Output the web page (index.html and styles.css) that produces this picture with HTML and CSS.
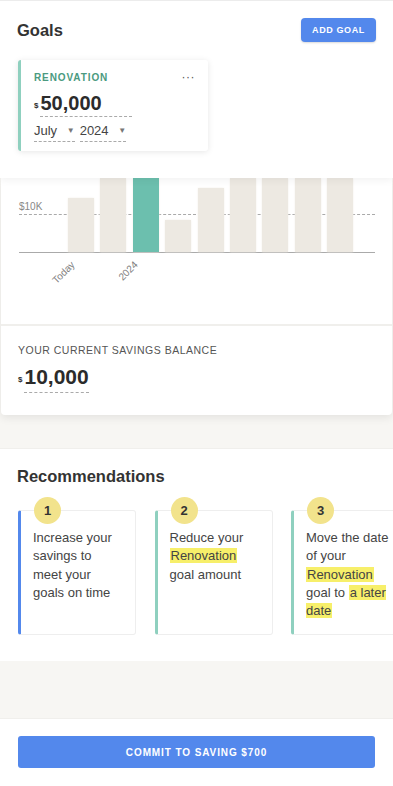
FILE: index.html
```html
<!DOCTYPE html>
<html lang="en">
<head>
  <meta charset="UTF-8" />
  <title>Goals</title>
  <link rel="stylesheet" href="styles.css">
</head>
<body>

  <header class="goals-header">
    <div class="goals-top">
      <h1 class="title">Goals</h1>
      <button class="btn-small">ADD GOAL</button>
    </div>

    <div class="goal-card">
      <div class="goal-name-row">
        <span class="goal-name">RENOVATION</span>
        <span class="goal-menu">&middot;&middot;&middot;</span>
      </div>
      <div class="goal-amount"><sup>$</sup><span class="dashed">50,000</span></div>
      <div class="goal-date">
        <span class="dashed date-part">July <span class="caret">&#9660;</span></span>
        <span class="dashed date-part">2024 <span class="caret">&#9660;</span></span>
      </div>
    </div>
  </header>

  <section class="chart-card">
    <div class="chart">
      <div class="plot">
        <span class="axis-label">$10K</span>
        <div class="ref-line"></div>
        <div class="bars">
          <div class="bar" style="height: 54px"></div>
          <div class="bar" style="height: 74px"></div>
          <div class="bar current" style="height: 74px"></div>
          <div class="bar" style="height: 32px"></div>
          <div class="bar" style="height: 64px"></div>
          <div class="bar" style="height: 74px"></div>
          <div class="bar" style="height: 74px"></div>
          <div class="bar" style="height: 74px"></div>
          <div class="bar" style="height: 74px"></div>
        </div>
      </div>
      <div class="x-labels">
        <span class="x-label" style="left: 50px">Today</span>
        <span class="x-label" style="left: 113px">2024</span>
      </div>
    </div>

    <div class="balance">
      <div class="balance-label">YOUR CURRENT SAVINGS BALANCE</div>
      <div class="balance-amount"><sup>$</sup><span class="dashed">10,000</span></div>
    </div>
  </section>

  <section class="recs">
    <h2 class="title">Recommendations</h2>
    <div class="rec-row">
      <div class="rec-card blue">
        <span class="rec-num">1</span>
        <p>Increase your savings to meet your goals on time</p>
      </div>
      <div class="rec-card">
        <span class="rec-num">2</span>
        <p>Reduce your <mark>Renovation</mark> goal amount</p>
      </div>
      <div class="rec-card">
        <span class="rec-num">3</span>
        <p>Move the date of your <mark>Renovation</mark> goal to <mark>a later date</mark></p>
      </div>
    </div>
  </section>

  <div class="spacer"></div>

  <footer class="footer">
    <button class="btn-wide">COMMIT TO SAVING $700</button>
  </footer>

</body>
</html>
```

FILE: styles.css
```css
body {
  margin: 0;
  background: #f7f6f3;
  font-family: "Liberation Sans", Arial, sans-serif;
  color: #333;
}

.title {
  margin: 0;
  font-size: 16.5px;
  font-weight: 700;
  color: #333;
}

.goals-header {
  background: #fff;
  border-top: 1px solid #ececec;
  padding: 17px 17px 27px 17px;
  box-shadow: 0 2px 8px rgba(0, 0, 0, 0.06);
  position: relative;
  z-index: 2;
}

.goals-top {
  display: flex;
  justify-content: space-between;
  align-items: center;
  height: 24px;
}

.btn-small {
  height: 24px;
  width: 75px;
  background: #5388ec;
  color: #fff;
  border: none;
  border-radius: 4px;
  font-family: inherit;
  font-weight: 700;
  font-size: 9px;
  letter-spacing: 0.6px;
  box-shadow: 0 1px 2px rgba(0, 0, 0, 0.15);
}

.goal-card {
  width: 174px;
  height: 71px;
  margin-top: 18px;
  margin-left: 1px;
  padding: 10px 0 10px 13px;
  background: #fff;
  border-left: 3px solid #8fd0bf;
  border-radius: 3px;
  box-shadow: 0 1px 6px rgba(0, 0, 0, 0.1);
}

.goal-name-row {
  display: flex;
  justify-content: space-between;
  align-items: center;
  padding-right: 13px;
}

.goal-name {
  font-size: 10px;
  font-weight: 700;
  letter-spacing: 0.9px;
  color: #4b9a80;
}

.goal-menu {
  font-size: 12px;
  color: #555;
  letter-spacing: 0.5px;
}

sup {
  font-size: 8px;
  font-weight: 700;
  vertical-align: top;
  position: relative;
  top: 3px;
  margin-right: 2px;
}

.dashed {
  border-bottom: 1px dashed #aaa;
}

.goal-amount {
  margin-top: 7px;
  font-size: 20px;
  font-weight: 700;
  line-height: 24px;
  color: #2b2b2b;
}

.goal-amount .dashed {
  display: inline-block;
  width: 92px;
  padding-bottom: 1px;
}

.goal-date {
  margin-top: 6px;
  font-size: 13px;
  line-height: 16px;
  color: #444;
  display: flex;
  gap: 5px;
}

.date-part {
  padding-bottom: 0;
}

.caret {
  font-size: 8px;
  color: #777;
  margin-left: 6px;
  position: relative;
  top: -2px;
}

.chart-card {
  margin: 0 1px;
  background: #fff;
  border-radius: 0 0 4px 4px;
  box-shadow: 0 3px 8px rgba(0, 0, 0, 0.08);
}

.chart {
  height: 146px;
  padding: 0 17px 0 18px;
}

.plot {
  position: relative;
  height: 74px;
  border-bottom: 1px solid #aaa;
}

.axis-label {
  position: absolute;
  left: 0;
  top: 23px;
  font-size: 10px;
  color: #888;
}

.ref-line {
  position: absolute;
  left: 0;
  right: 0;
  top: 36px;
  border-top: 1px dashed #aaa;
}

.bars {
  position: relative;
  display: flex;
  align-items: flex-end;
  gap: 6.4px;
  height: 74px;
  padding-left: 49px;
}

.bar {
  width: 26px;
  background: #ede9e2;
  box-shadow: 0 0 2px #f3f0ea;
}

.bar.current {
  background: #6cbfae;
}

.x-labels {
  position: relative;
  height: 40px;
}

.x-label {
  position: absolute;
  top: 6px;
  font-size: 10px;
  color: #808080;
  transform: translateX(-100%) rotate(-45deg);
  transform-origin: right top;
}

.balance {
  border-top: 2px solid #f0efec;
  padding: 18px 17px 22px 17px;
}

.balance-label {
  font-size: 10.5px;
  letter-spacing: 0.5px;
  color: #555;
}

.balance-amount {
  margin-top: 9px;
  font-size: 21px;
  font-weight: 700;
  line-height: 24px;
  color: #2b2b2b;
}

.balance-amount .dashed {
  display: inline-block;
  padding-bottom: 3px;
}

.recs {
  margin-top: 33px;
  background: #fff;
  border-top: 1px solid #f0efec;
  padding: 18px 0 26px 17px;
  overflow: hidden;
}

.rec-row {
  display: flex;
  gap: 18.5px;
  margin-top: 24px;
  padding-left: 1px;
}

.rec-card {
  position: relative;
  flex: 0 0 auto;
  width: 88px;
  height: 105px;
  padding: 18px 14px 0 12px;
  border: 1px solid #eeeeee;
  border-left: 3px solid #8fd0bf;
  border-radius: 3px;
  background: #fff;
}

.rec-card.blue {
  border-left-color: #5388ec;
}

.rec-num {
  position: absolute;
  top: -14px;
  left: 13px;
  width: 27px;
  height: 27px;
  border-radius: 50%;
  background: #f2e38c;
  font-size: 13px;
  font-weight: 700;
  line-height: 27px;
  text-align: center;
}

.rec-card p {
  margin: 0;
  font-size: 13px;
  line-height: 18.3px;
  color: #444;
}

mark {
  background: #f7ef6a;
  color: #444;
  padding: 0 1px;
}

.spacer {
  height: 57px;
}

.footer {
  background: #fff;
  border-top: 1px solid #f0efec;
  padding: 17px 18px 18px 18px;
}

.btn-wide {
  width: 100%;
  height: 32px;
  background: #5388ec;
  color: #fff;
  border: none;
  border-radius: 3px;
  font-family: inherit;
  font-weight: 700;
  font-size: 10px;
  letter-spacing: 0.9px;
}
```
